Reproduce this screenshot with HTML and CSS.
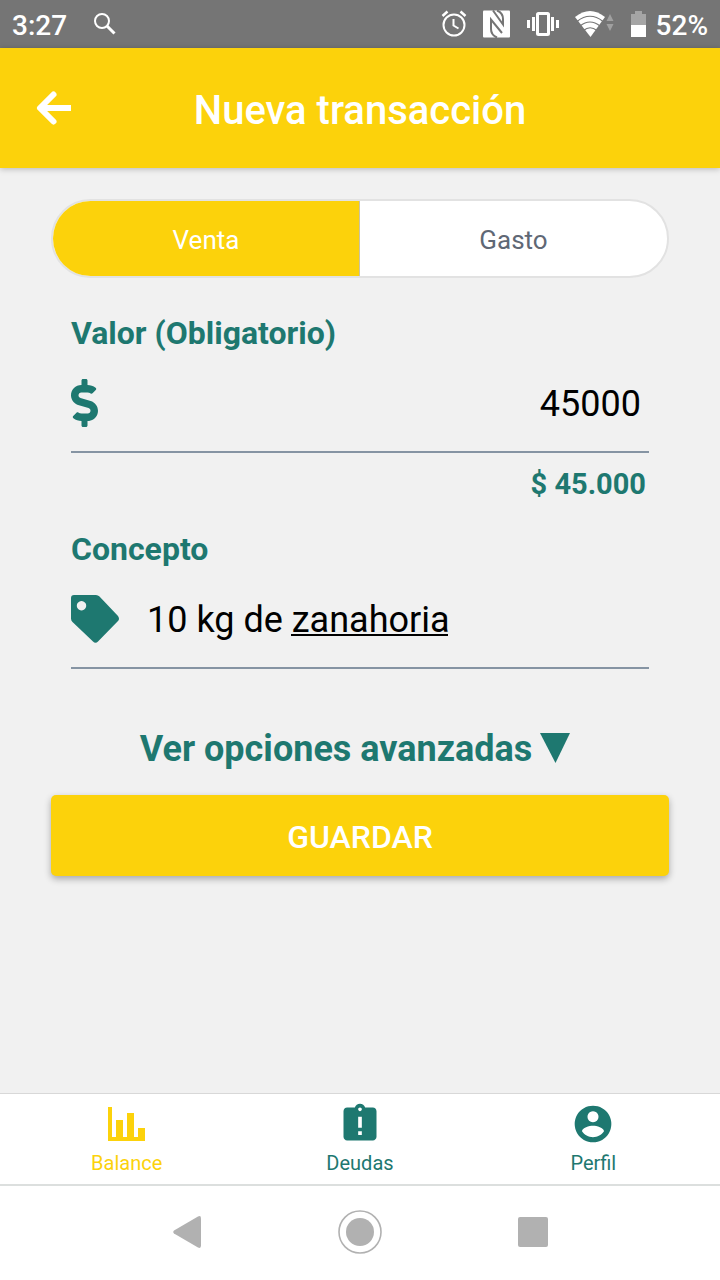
FILE: index.html
```html
<!DOCTYPE html>
<html lang="es">
<head>
<meta charset="utf-8">
<meta name="viewport" content="width=device-width, initial-scale=1">
<title>Nueva transacción</title>
<link rel="stylesheet" href="styles.css">
</head>
<body>
<div class="screen">
  <div class="status">
    <span class="status-text">3:27</span>
    <svg class="status-search" width="24" height="24" viewBox="0 0 24 24" fill="none" stroke="#fff"><circle cx="9" cy="9" r="7" stroke-width="2"/><path d="M14 14l7.500 7.500" stroke-width="3"/></svg>
    <div class="status-icons">
      <svg width="26" height="28" viewBox="0 0 26 28" fill="none" stroke="#fff" stroke-width="2"><circle cx="13" cy="15" r="10.500"/><path d="M12.500 9v6.500l5 3"/><path d="M1.500 6l5-4.500M24.500 6l-5-4.500" stroke-width="2.500"/></svg>
      <svg width="28" height="28" viewBox="0 0 28 28"><rect width="27" height="27" y=".5" rx="1" fill="#fff"/><path d="M14 27.500Q8 25 8 19V9.500L19 23M10 .5l10 14V9q0-6-6-8.500" fill="none" stroke="#757575" stroke-width="2"/></svg>
      <svg width="32" height="26" viewBox="0 0 32 26" fill="none" stroke="#fff"><rect x="10.500" y="2.500" width="11" height="21" rx="1" stroke-width="3"/><path d="M6.500 6v14M25.500 6v14" stroke-width="3"/><path d="M1.500 9v8M30.500 9v8" stroke-width="3"/></svg>
      <svg width="40" height="28" viewBox="0 0 40 28"><path d="M0 7Q15-5 30 7L15.500 27z" fill="#fff"/><path d="M2 11.500Q15 1 28 11.500M5 16Q15 8 25 16M8.500 20.500Q15 15 22 20.500" fill="none" stroke="#757575" stroke-width="1.200"/><path d="M31.500 11l3.500-7 3.500 7zM31.500 14l3.500 7 3.500-7z" fill="#a0a0a0"/></svg>
      <svg width="16" height="26" viewBox="0 0 16 26"><path d="M4 0h7v3h4v11H0V3h4z" fill="#a5a5a5"/><path d="M0 14h15v12H0z" fill="#fff"/></svg>
    </div>
    <span class="status-text">52%</span>
  </div>

  <header class="header">
    <button class="back" type="button" aria-label="Volver">
      <svg width="36" height="36" viewBox="0 0 36 36" fill="none" stroke="#fff" stroke-width="6"><path d="M6 18h30"/><path d="M18.500 4.500L5 18l13.500 13.500" stroke-linecap="round" stroke-linejoin="round"/></svg>
    </button>
    <h1 class="title">Nueva transacción</h1>
  </header>

  <main class="main">
    <div class="segmented">
      <button class="segment segment-active" type="button" aria-pressed="true">Venta</button>
      <button class="segment" type="button" aria-pressed="false">Gasto</button>
    </div>

    <div class="field">
      <label class="label" for="valor">Valor (Obligatorio)</label>
      <div class="field-row">
        <svg width="27" height="48" viewBox="0 0 288 512" fill="#1e7870"><path d="M209.200 233.400l-108-31.600C88.700 198.200 80 186.500 80 173.500c0-16.300 13.200-29.500 29.500-29.500h66.300c12.200 0 24.200 3.700 34.200 10.500 6.100 4.100 14.300 3.100 19.500-2l34.800-34c7.100-6.900 6.100-18.400-1.800-24.500C238 74.800 207.400 64.100 176 64V16c0-8.800-7.200-16-16-16h-32c-8.800 0-16 7.200-16 16v48h-2.500C45.800 64-5.400 118.700.5 183.600c4.200 46.100 39.400 83.600 83.800 96.600l102.500 30c12.500 3.700 21.200 15.300 21.200 28.300 0 16.300-13.200 29.500-29.500 29.500h-66.300C100 368 88 364.300 78 357.500c-6.100-4.100-14.300-3.100-19.500 2l-34.800 34c-7.100 6.900-6.100 18.400 1.800 24.500 24.500 19.200 55.100 29.900 86.500 30v48c0 8.800 7.200 16 16 16h32c8.800 0 16-7.200 16-16v-48.200c46.600-.9 90.300-28.600 105.700-72.700 21.500-61.600-14.600-124.800-72.500-141.700z"/></svg>
        <input class="input input-amount" id="valor" type="text" inputmode="numeric" value="45000">
      </div>
      <output class="formatted" for="valor">$ 45.000</output>
    </div>

    <div class="field">
      <label class="label" for="concepto">Concepto</label>
      <div class="field-row">
        <svg width="48" height="48" viewBox="0 0 48 48" fill="#1e7870"><path fill-rule="evenodd" d="M3 0h22q2 0 3.500 1.500L47 21q2 3 0 5L27 46.500q-2.500 2.500-5 0L1.500 27Q0 25.500 0 23.500V3q0-3 3-3zM10.500 6a4.700 4.700 0 1 0 .01 0z"/></svg>
        <input class="input input-concept" id="concepto" type="text" value="10 kg de zanahoria">
      </div>
    </div>

    <button class="advanced" type="button">Ver opciones avanzadas
      <svg width="40" height="32" viewBox="0 0 40 32" fill="#1e7870"><path d="M0 0h30L15.500 30z"/></svg>
    </button>
    <button class="save" type="submit">GUARDAR</button>
  </main>

  <nav class="tabs">
    <a class="tab tab-active" href="#balance">
      <svg width="44" height="44" viewBox="0 0 44 44" fill="currentColor"><path d="M3 5h4v30h4V18h7v17h4V11h7v24h4V26h7v13H3z"/></svg>
      Balance
    </a>
    <a class="tab" href="#deudas">
      <svg width="44" height="44" viewBox="0 0 24 24" fill="currentColor"><path d="M19 3h-4.180C14.400 1.840 13.300 1 12 1c-1.300 0-2.400.84-2.820 2H5c-1.100 0-2 .9-2 2v14c0 1.100.9 2 2 2h14c1.100 0 2-.9 2-2V5c0-1.100-.9-2-2-2zm-6 15h-2v-2h2v2zm0-4h-2V8h2v6zm-1-9c-.55 0-1-.45-1-1s.45-1 1-1 1 .45 1 1-.45 1-1 1z"/></svg>
      Deudas
    </a>
    <a class="tab" href="#perfil">
      <svg width="44" height="44" viewBox="0 0 24 24" fill="currentColor"><path fill-rule="evenodd" d="M12 2a10 10 0 1 0 .01 0zM12 5a3 3 0 1 1-.01 0zM12 13c2 0 6 1.100 6 3-1.300 2-3.500 3.200-6 3.200S7.300 18 6 16c0-1.900 4-3 6-3z"/></svg>
      Perfil
    </a>
  </nav>

  <div class="system">
    <button class="system-key" type="button" aria-label="Atrás"><svg width="28" height="32" viewBox="0 0 28 32" fill="#b1b1b1"><path d="M25 .500q3-1.500 3 2v27q0 3.500-3 2L1 17.500Q-.500 16 1 14.500z"/></svg></button>
    <button class="system-key" type="button" aria-label="Inicio"><svg width="44" height="44" viewBox="0 0 44 44"><circle cx="22" cy="22" r="21" fill="none" stroke="#b1b1b1" stroke-width="1.600"/><circle cx="22" cy="22" r="14" fill="#b1b1b1"/></svg></button>
    <button class="system-key" type="button" aria-label="Recientes"><svg width="30" height="30" viewBox="0 0 30 30"><rect width="30" height="30" rx="2" fill="#b1b1b1"/></svg></button>
  </div>
</div>
</body>
</html>
```
FILE: styles.css
```css
* {
  box-sizing: border-box;
}

body {
  margin: 0;
  font-family: Roboto, "Liberation Sans", sans-serif;
  background: #f1f1f1;
}

button {
  margin: 0;
  padding: 0;
  border: 0;
  background: none;
  font-family: inherit;
}

svg {
  display: block;
  flex: none;
}

.screen {
  display: flex;
  flex-direction: column;
  min-height: 100vh;
}

.status {
  display: flex;
  align-items: center;
  height: 48px;
  padding: 0 12px;
  background: #757575;
  color: #fff;
}

.status-text {
  font-size: 28px;
  font-weight: 500;
  line-height: 32px;
  padding-top: 4px;
}

.status-search {
  margin-left: 26px;
}

.status-icons {
  display: flex;
  align-items: center;
  gap: 16px;
  margin-left: auto;
  margin-right: 9px;
}

.header {
  display: grid;
  grid-template-columns: 1fr auto 1fr;
  align-items: center;
  height: 120px;
  padding: 0 35px;
  background: #fcd20b;
  box-shadow: 0 1px 6px rgba(0, 0, 0, 0.25);
}

.back {
  justify-self: start;
}

.title {
  margin: 0;
  padding-top: 6px;
  color: #fff;
  font-size: 40px;
  font-weight: 500;
  line-height: 48px;
}

.main {
  flex: 1;
  display: flex;
  flex-direction: column;
  padding: 31px 51px;
}

.segmented {
  display: grid;
  grid-template-columns: 1fr 1fr;
  height: 79px;
  margin-bottom: 35px;
  border: 2px solid #e2e2e2;
  border-radius: 40px;
  background: #fff;
  overflow: hidden;
}

.segment {
  padding-top: 3px;
  color: #5f6875;
  font-size: 26px;
}

.segment-active {
  background: #fcd20b;
  color: #fff;
  border-right: 1px solid #c9c3a4;
}

.field {
  display: flex;
  flex-direction: column;
  margin: 0 20px 25px;
}

.label {
  color: #1e7870;
  font-size: 32px;
  font-weight: 700;
  line-height: 40px;
}

.field-row {
  display: flex;
  align-items: center;
  height: 100px;
  padding-top: 1px;
  border-bottom: 2px solid #8694a3;
}

.input {
  flex: 1;
  min-width: 0;
  height: 56px;
  padding: 2px 0 0;
  border: 0;
  outline: 0;
  background: none;
  color: #000;
  font-family: inherit;
  font-size: 36px;
}

.input-amount {
  padding-right: 8px;
  text-align: right;
}

/* Composing underline below the last word */
.input-concept {
  margin-left: 28px;
  background: linear-gradient(#000, #000) 144px 43px / 157px 2px no-repeat;
}

.formatted {
  align-self: flex-end;
  margin-top: 11px;
  padding-right: 3px;
  color: #1e7870;
  font-size: 29px;
  font-weight: 700;
  line-height: 40px;
}

.advanced {
  display: flex;
  justify-content: center;
  align-items: center;
  gap: 8px;
  margin: 31px 0 22px;
  color: #1e7870;
  font-size: 36px;
  font-weight: 700;
  line-height: 48px;
}

.save {
  height: 81px;
  padding-top: 3px;
  border-radius: 5px;
  background: #fcd20b;
  box-shadow: 0 3px 7px rgba(0, 0, 0, 0.3);
  color: #fff;
  font-size: 32px;
  font-weight: 500;
}

.tabs {
  display: grid;
  grid-template-columns: repeat(3, 1fr);
  height: 93px;
  padding: 8px 10px 0;
  border-top: 1px solid #d8d8d8;
  border-bottom: 2px solid #dcdfde;
  background: #fff;
}

.tab {
  display: flex;
  flex-direction: column;
  align-items: center;
  gap: 5px;
  color: #1e7870;
  font-size: 20px;
  line-height: 24px;
  text-decoration: none;
}

.tab-active {
  color: #fcd20b;
}

.system {
  display: grid;
  grid-template-columns: repeat(3, 24%);
  justify-content: center;
  height: 94px;
  padding-bottom: 2px;
  background: #fff;
}

.system-key {
  display: flex;
  justify-content: center;
  align-items: center;
}
```
